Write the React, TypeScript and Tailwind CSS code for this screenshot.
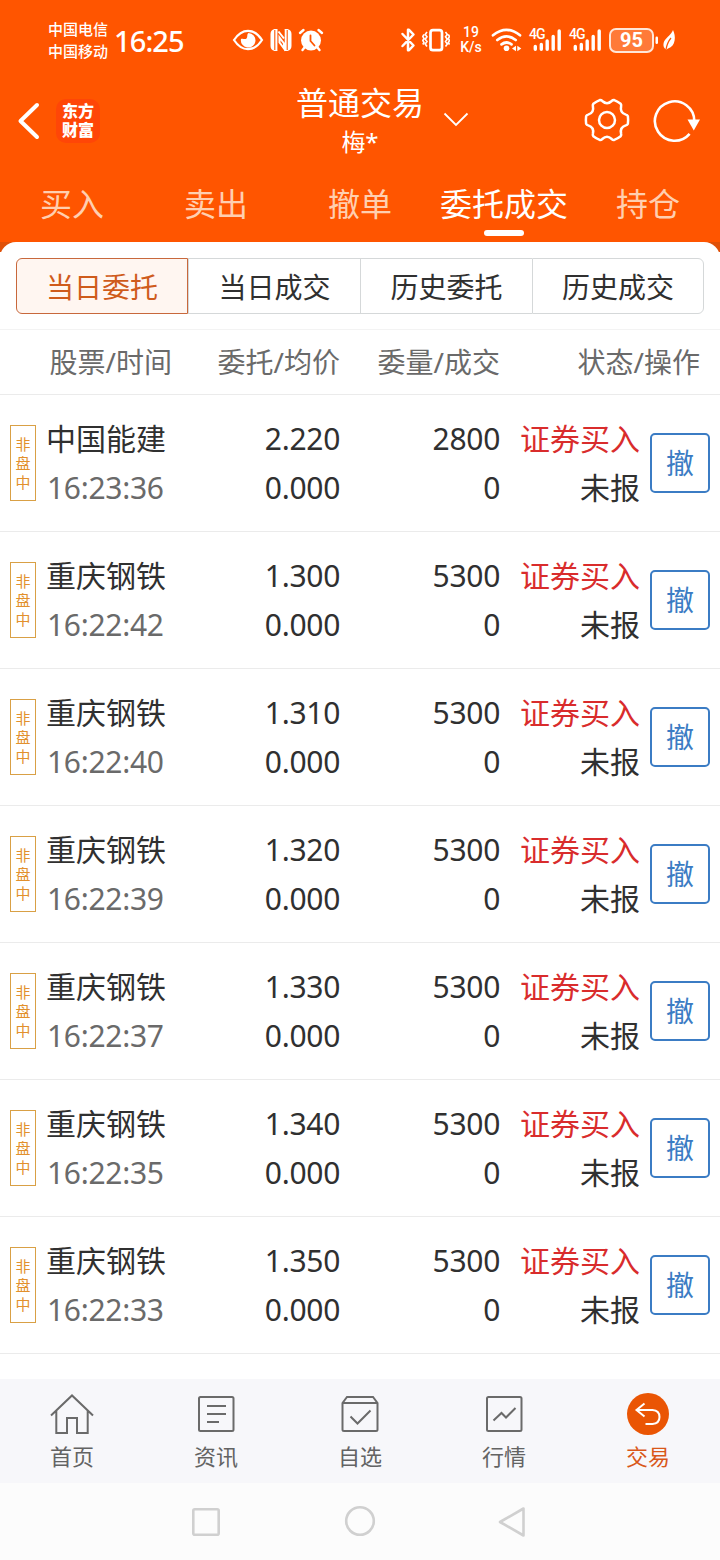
import React from "react";

type Order = { name: string; time: string; price: string; avg: string; qty: string; done: string };

const orders: Order[] = [
  { name: "中国能建", time: "16:23:36", price: "2.220", avg: "0.000", qty: "2800", done: "0" },
  { name: "重庆钢铁", time: "16:22:42", price: "1.300", avg: "0.000", qty: "5300", done: "0" },
  { name: "重庆钢铁", time: "16:22:40", price: "1.310", avg: "0.000", qty: "5300", done: "0" },
  { name: "重庆钢铁", time: "16:22:39", price: "1.320", avg: "0.000", qty: "5300", done: "0" },
  { name: "重庆钢铁", time: "16:22:37", price: "1.330", avg: "0.000", qty: "5300", done: "0" },
  { name: "重庆钢铁", time: "16:22:35", price: "1.340", avg: "0.000", qty: "5300", done: "0" },
  { name: "重庆钢铁", time: "16:22:33", price: "1.350", avg: "0.000", qty: "5300", done: "0" },
];

function Signal() {
  return (
    <div className="relative h-6 w-8">
      <span className="absolute -top-px left-0 font-[Roboto] text-[14px] leading-[14px] font-medium tracking-[-1px]">4G</span>
      <svg className="block" width="32" height="24" viewBox="0 0 32 24" stroke="#fff" strokeWidth="3.4" strokeLinecap="round">
        <path d="M6.3 18.500v2.700M12.3 16.500v4.700M18.2 13v8.2M24.2 8.5v12.7M30.2 3v18.2" />
      </svg>
    </div>
  );
}

function StatusBar() {
  return (
    <div className="flex h-20 items-center pl-12">
      <div className="-mt-px flex w-[66px] flex-col text-[15px] leading-[22px] font-medium whitespace-nowrap">
        <span>中国电信</span>
        <span>中国移动</span>
      </div>
      <span className="mt-px w-[118px] text-[29px] leading-8 font-medium tracking-[-0.9px]">16:25</span>
      <svg width="32" height="24" viewBox="232 28 32 24" fill="none" stroke="#fff" strokeWidth="2.2">
        <path d="M234 40q6-9.200 14-9.200T262 40q-6 9.200-14 9.200T234 40Z" />
        <path d="M248.500 33c-2 1.500-.5 3.800-2 5.500-1.500 1.500-3.500-.5-5.500.500a7.300 7.300 0 1 0 7.500-6Z" fill="#fff" stroke="none" />
      </svg>
      <svg className="ml-[6px]" width="22" height="24" viewBox="270 28 22 24" fill="none" stroke="#fff">
        <path d="M274.500 29h3v22h-3q-4-1-4-5V34q0-4 4-5ZM287.500 51h-3V29h3q4 1 4 5v12q0 4-4 5Z" fill="#fff" stroke="none" />
        <path d="M274.800 30v20M287.200 30v20" stroke="#ff5500" strokeWidth="1.100" />
        <path d="M278.300 50.500V34l5.600 7v-11.500M278.300 30l5.600 7" stroke="#ff5500" strokeWidth="1.100" />
        <path d="M278.500 31.500l5.500 7M279.500 37.500l4.500 6v5l-4.500-6Z" strokeWidth="2" />
      </svg>
      <svg className="ml-[6px]" width="26" height="24" viewBox="298 28 26 24" fill="none" stroke="#fff" strokeWidth="2.4" strokeLinecap="round">
        <circle cx="311" cy="40.500" r="10" fill="#fff" stroke="none" />
        <path d="M300 33l3.500-3M322 33l-3.500-3M304.500 47.500l-2 2.500M317.500 47.500l2 2.500" />
        <path d="M310.500 35.500V41l4 4.500" stroke="#ff5500" strokeWidth="1.800" />
      </svg>
      <svg className="ml-[76px]" width="16" height="26" viewBox="400 27 16 26" fill="none" stroke="#fff" strokeWidth="2.500" strokeLinejoin="round" strokeLinecap="round">
        <path d="M402.500 34l11 11.500-4.500 4.700h-1V43M402.500 46l11-11.500-4.500-4.700h-1V37" />
      </svg>
      <svg className="ml-[6px]" width="28" height="24" viewBox="422 28 28 24" fill="none" stroke="#fff">
        <rect x="430.500" y="30.200" width="11.500" height="20" rx="2.500" strokeWidth="2.700" />
        <path d="M427 32l-1.800 2.400 1.800 2.400-1.800 2.400 1.800 2.400-1.800 2.400 1.800 2.400M424 34.500l-1.200 2 1.200 2-1.200 2 1.200 2-1.200 2M445.500 32l1.800 2.400-1.800 2.400 1.800 2.400-1.800 2.400 1.800 2.400-1.800 2.400M448.300 34.500l1.200 2-1.200 2 1.200 2-1.200 2 1.200 2" strokeWidth="1.600" />
      </svg>
      <div className="ml-[7px] flex w-[28px] flex-col items-center font-[Roboto] text-[14px] leading-[15px] font-medium">
        <span>19</span>
        <span>K/s</span>
      </div>
      <svg className="ml-[5px]" width="32" height="24" viewBox="490 28 32 24" fill="none" stroke="#fff" strokeWidth="2.700" strokeLinecap="round">
        <path d="M493 35.300q13.500-10.800 27 0M497.300 40q9.200-7.200 18.400 0M501.500 44.400q5-3.800 10 0" />
        <circle cx="506.500" cy="48.300" r="2.800" fill="#fff" stroke="none" />
        <path d="M516 45.800v5.400l-4-2.700ZM517.300 45.800v5.400l4-2.700Z" fill="#fff" stroke="none" />
      </svg>
      <div className="ml-[7px]"><Signal /></div>
      <div className="ml-[8px]"><Signal /></div>
      <div className="ml-[8px] flex h-[25px] w-[45px] items-center justify-center rounded-[7px] border-2 border-[#ffe6d8] bg-[#ff7a38] font-[Roboto] text-[20px] leading-[22px] font-bold">95</div>
      <svg className="ml-px" width="24" height="24" viewBox="655 28 24 24" fill="#fff">
        <rect x="655.500" y="36.500" width="2.500" height="7.500" rx="1.200" />
        <path d="M673 30c3 6 3 16-5 18.500l-1.500 1c-3.500-1-4-6-1.500-9.500 2-3 6-5 8-10Z" />
        <path d="M666 49.500q1.200-7 5-11.500" stroke="#ff5500" strokeWidth="1.200" fill="none" />
      </svg>
    </div>
  );
}

const polar = (deg: number, r: number) => {
  const a = (deg * Math.PI) / 180;
  return `${(23 + r * Math.cos(a)).toFixed(2)} ${(23 + r * Math.sin(a)).toFixed(2)}`;
};

const gearPath =
  `M${polar(-10, 21.200)}` +
  [0, 60, 120, 180, 240, 300]
    .map(
      (d) =>
        `Q${polar(d, 21.400)} ${polar(d + 10, 21.200)}Q${polar(d + 14, 20.900)} ${polar(d + 16, 19.600)}Q${polar(d + 30, 14.600)} ${polar(d + 44, 19.600)}Q${polar(d + 46, 20.900)} ${polar(d + 50, 21.200)}`,
    )
    .join("") +
  "Z";

function TitleBar() {
  return (
    <div className="flex h-[86px] items-start justify-between pr-5 pl-4">
      <div className="flex w-[200px] items-start pt-[19px]">
        <svg className="mt-px" width="26" height="40" viewBox="0 0 26 40" fill="none" stroke="#fff" strokeWidth="4" strokeLinecap="round" strokeLinejoin="round">
          <path d="M21 5 4.500 21 21 37" />
        </svg>
        <div className="ml-[14px] flex h-11 w-11 flex-col items-center justify-center rounded-[10px] bg-[#ff4607] text-[16px] leading-[19px] font-black">
          <span>东方</span>
          <span>财富</span>
        </div>
      </div>
      <div className="flex items-start">
        <div className="ml-[49px] flex flex-col items-center whitespace-nowrap">
          <span className="text-[32px] leading-[46px]">普通交易</span>
          <span className="text-2xl leading-[32px]">梅*</span>
        </div>
        <svg className="mt-[32px] ml-[19px]" width="26" height="16" viewBox="0 0 26 16" fill="none" stroke="#fff" strokeWidth="1.800">
          <path d="M1.500 1.500 13 13 24.500 1.500" />
        </svg>
      </div>
      <div className="flex w-[200px] justify-end gap-[22px] pt-[17px]">
        <svg width="46" height="46" viewBox="0 0 46 46" fill="none" stroke="#fff" strokeWidth="2.500" strokeLinejoin="round">
          <path d={gearPath} />
          <circle cx="23" cy="23" r="8" />
        </svg>
        <svg width="48" height="48" viewBox="0 0 48 48" fill="none" stroke="#fff" strokeWidth="2.600">
          <path d="M42.300 24A19.700 19.700 0 1 0 37.600 36.800" />
          <path d="M35.500 22.500H48l-6.200 11Z" fill="#fff" stroke="none" />
        </svg>
      </div>
    </div>
  );
}

const tabs = ["买入", "卖出", "撤单", "委托成交", "持仓"];
const segments = ["当日委托", "当日成交", "历史委托", "历史成交"];

function OrderRow({ o }: { o: Order }) {
  return (
    <div className="flex h-[137px] items-start border-b border-[#ebebeb] pl-[10px] text-[30px] leading-[49px] text-[#303030]">
      <div className="mt-[30px] flex h-[76px] w-[26px] flex-col items-center justify-center border border-[#d9a045] text-[15px] leading-[19px] text-[#e2902c]">
        <span>非</span>
        <span>盘</span>
        <span>中</span>
      </div>
      <div className="mt-[19px] ml-[10px] flex w-[131px] flex-col whitespace-nowrap">
        <span>{o.name}</span>
        <span className="pl-px tracking-[-0.3px] text-[#6a6a6a]">{o.time}</span>
      </div>
      <div className="mt-[19px] flex w-[163px] flex-col items-end tracking-[-0.3px]">
        <span>{o.price}</span>
        <span>{o.avg}</span>
      </div>
      <div className="mt-[19px] flex w-[160px] flex-col items-end tracking-[-0.3px]">
        <span>{o.qty}</span>
        <span>{o.done}</span>
      </div>
      <div className="mt-[19px] flex w-[140px] flex-col items-end">
        <span className="text-[#d92c2c]">证券买入</span>
        <span>未报</span>
      </div>
      <button className="mt-[38px] ml-[10px] flex h-[60px] w-[60px] items-center justify-center rounded-[5px] border-2 border-[#3b7cc4] text-[28px] leading-none text-[#3b7cc4]">撤</button>
    </div>
  );
}

const navItems: { label: string; icon: React.ReactNode }[] = [
  { label: "首页", icon: <path d="M1 21.500 22 1.500l21 20M6.300 17v22H17V24h10v15h10.700V17" /> },
  { label: "资讯", icon: <><rect x="5" y="3" width="34.500" height="34" rx="1.500" /><path d="M13 12h19M13 20h19M13 28h12" /></> },
  { label: "自选", icon: <><path d="M4.500 9 9 3h26l4.500 6v26.500q0 1.500-1.500 1.500H6q-1.500 0-1.500-1.500ZM4.500 9h35" /><path d="m12.500 22.500 7 7 13-13" /></> },
  { label: "行情", icon: <><rect x="5" y="3" width="34.500" height="34" rx="1.500" /><path d="m11.500 26.500 8-7.500 4.500 4.500 9.500-9.500" /></> },
  { label: "交易", icon: <><circle cx="22" cy="20" r="21" fill="#ea5504" stroke="none" /><path d="M18.500 9.500 10.500 16l8 6.500M11 16h15.500q7 .5 7 7t-7 7h-7" stroke="#fff" /></> },
];

export default function App() {
  return (
    <div className="flex h-[1560px] w-[720px] flex-col overflow-hidden bg-white font-['Noto_Sans','Noto_Sans_CJK_SC',sans-serif]">
      <header className="h-[242px] shrink-0 bg-[#ff5500] text-white">
        <StatusBar />
        <TitleBar />
        <nav className="grid h-[76px] grid-cols-5 text-[32px] leading-[76px]">
          {tabs.map((t) =>
            t === "委托成交" ? (
              <div key={t} className="relative text-center whitespace-nowrap">
                {t}
                <span className="absolute bottom-[6px] left-[52px] h-[6px] w-10 rounded-full bg-white" />
              </div>
            ) : (
              <div key={t} className="text-center text-[#ffcfb0]">{t}</div>
            ),
          )}
        </nav>
      </header>
      <main className="h-[1137px] shrink-0 bg-linear-to-b from-[#df5008] from-[10px] to-white to-[10px]">
        <div className="rounded-t-[16px] bg-white">
          <div className="flex h-[88px] border-b border-[#f3f3f3] px-4 pt-4 text-[28px] leading-[56px] text-[#303030]">
            {segments.map((s, i) => (
              <div
                key={s}
                className={
                  i === 0
                    ? "h-14 w-[172px] rounded-l-[6px] border border-[#c8683c] bg-[#fff6f1] text-center text-[#cf5b1c]"
                    : i === 3
                      ? "h-14 w-[172px] rounded-r-[6px] border border-[#d5d8d9] text-center"
                      : "h-14 w-[172px] border-y border-l border-[#d5d8d9] text-center"
                }
              >
                {s}
              </div>
            ))}
          </div>
          <div className="flex h-[65px] border-b border-[#ebebeb] text-right text-[28px] leading-[64px] whitespace-nowrap text-[#6a6a6a]">
            <span className="w-[172px]">股票/时间</span>
            <span className="w-[168px]">委托/均价</span>
            <span className="w-[160px]">委量/成交</span>
            <span className="w-[200px]">状态/操作</span>
          </div>
          {orders.map((o) => (
            <OrderRow key={o.time} o={o} />
          ))}
        </div>
      </main>
      <nav className="grid h-[104px] shrink-0 grid-cols-5 bg-[#f7f7fa] text-[22px] leading-8 text-[#636363]">
        {navItems.map((n) => (
          <div key={n.label} className={n.label === "交易" ? "flex flex-col items-center pt-[14px] text-[#d9581a]" : "flex flex-col items-center pt-[14px]"}>
            <svg className="shrink-0" width="44" height="42" viewBox="0 -1 44 42" fill="none" stroke="#6a6a6a" strokeWidth="2">
              {n.icon}
            </svg>
            <span className="mt-[5px]">{n.label}</span>
          </div>
        ))}
      </nav>
      <div className="flex h-[77px] shrink-0 justify-center bg-[#fcfcfc] pt-[22px]">
        <svg width="340" height="34" viewBox="190 1505 340 34" fill="none" stroke="#d0d0d0" strokeWidth="2.600" strokeLinejoin="round">
          <rect x="193.300" y="1509.300" width="25.400" height="25.400" rx="1.500" />
          <circle cx="360" cy="1521" r="13.800" />
          <path d="M500 1522 523.500 1508.500v27Z" />
        </svg>
      </div>
    </div>
  );
}
